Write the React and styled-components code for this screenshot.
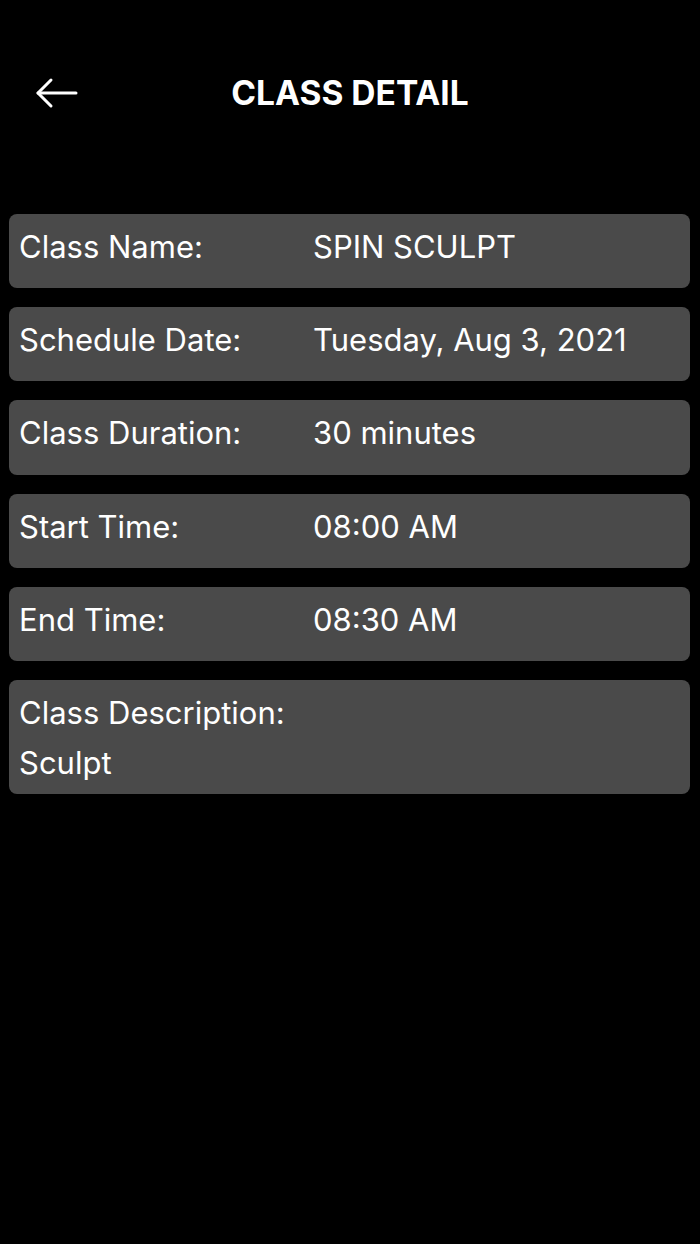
import styled, { createGlobalStyle } from 'styled-components';

const Global = createGlobalStyle`
  html, body {
    margin: 0;
    padding: 0;
    background: #000;
  }
  body {
    font-family: Inter, "Liberation Sans", sans-serif;
    color: #fff;
  }
`;

const Screen = styled.div`
  width: 700px;
  min-height: 1244px;
  background: #000;
  display: flex;
  flex-direction: column;
`;

const Header = styled.div`
  position: relative;
  height: 60px;
  margin-top: 63px;
  display: flex;
  align-items: center;
  justify-content: center;
`;

const BackButton = styled.button`
  position: absolute;
  left: 31px;
  top: 50%;
  transform: translateY(-50%);
  background: none;
  border: none;
  padding: 4px;
  display: flex;
  color: #fff;
  cursor: pointer;
`;

const Title = styled.h1`
  margin: 0;
  font-size: 33.5px;
  font-weight: 700;
`;

const List = styled.div`
  display: flex;
  flex-direction: column;
  gap: 19px;
  padding: 91px 10px 0 9px;
`;

const Card = styled.div`
  background: #4a4a4a;
  border-radius: 8px;
  min-height: 74.2px;
  box-sizing: border-box;
  padding: 14px 10px ${p => (p.stacked ? '12px' : '0')};
  display: flex;
  flex-direction: ${p => (p.stacked ? 'column' : 'row')};
`;

const Label = styled.div`
  font-size: 31px;
  line-height: 38px;
  width: ${p => (p.stacked ? 'auto' : '294px')};
  flex-shrink: 0;
`;

const Value = styled.div`
  font-size: 31px;
  line-height: 38px;
  padding-top: ${p => (p.stacked ? '12px' : '0')};
`;

const rows = [
  ['Class Name:', 'SPIN SCULPT'],
  ['Schedule Date:', 'Tuesday, Aug 3, 2021'],
  ['Class Duration:', '30 minutes'],
  ['Start Time:', '08:00 AM'],
  ['End Time:', '08:30 AM'],
];

export default function App() {
  return (
    <Screen>
      <Global />
      <Header>
        <BackButton aria-label="Back">
          <svg width="44" height="32" viewBox="0 0 44 32" fill="none" stroke="#fff" strokeWidth="3" strokeLinecap="round" strokeLinejoin="round">
            <path d="M41 16H3" />
            <path d="M16 3L3 16l13 13" />
          </svg>
        </BackButton>
        <Title>CLASS DETAIL</Title>
      </Header>
      <List>
        {rows.map(([label, value]) => (
          <Card key={label}>
            <Label>{label}</Label>
            <Value>{value}</Value>
          </Card>
        ))}
        <Card stacked>
          <Label stacked>Class Description:</Label>
          <Value stacked>Sculpt</Value>
        </Card>
      </List>
    </Screen>
  );
}
